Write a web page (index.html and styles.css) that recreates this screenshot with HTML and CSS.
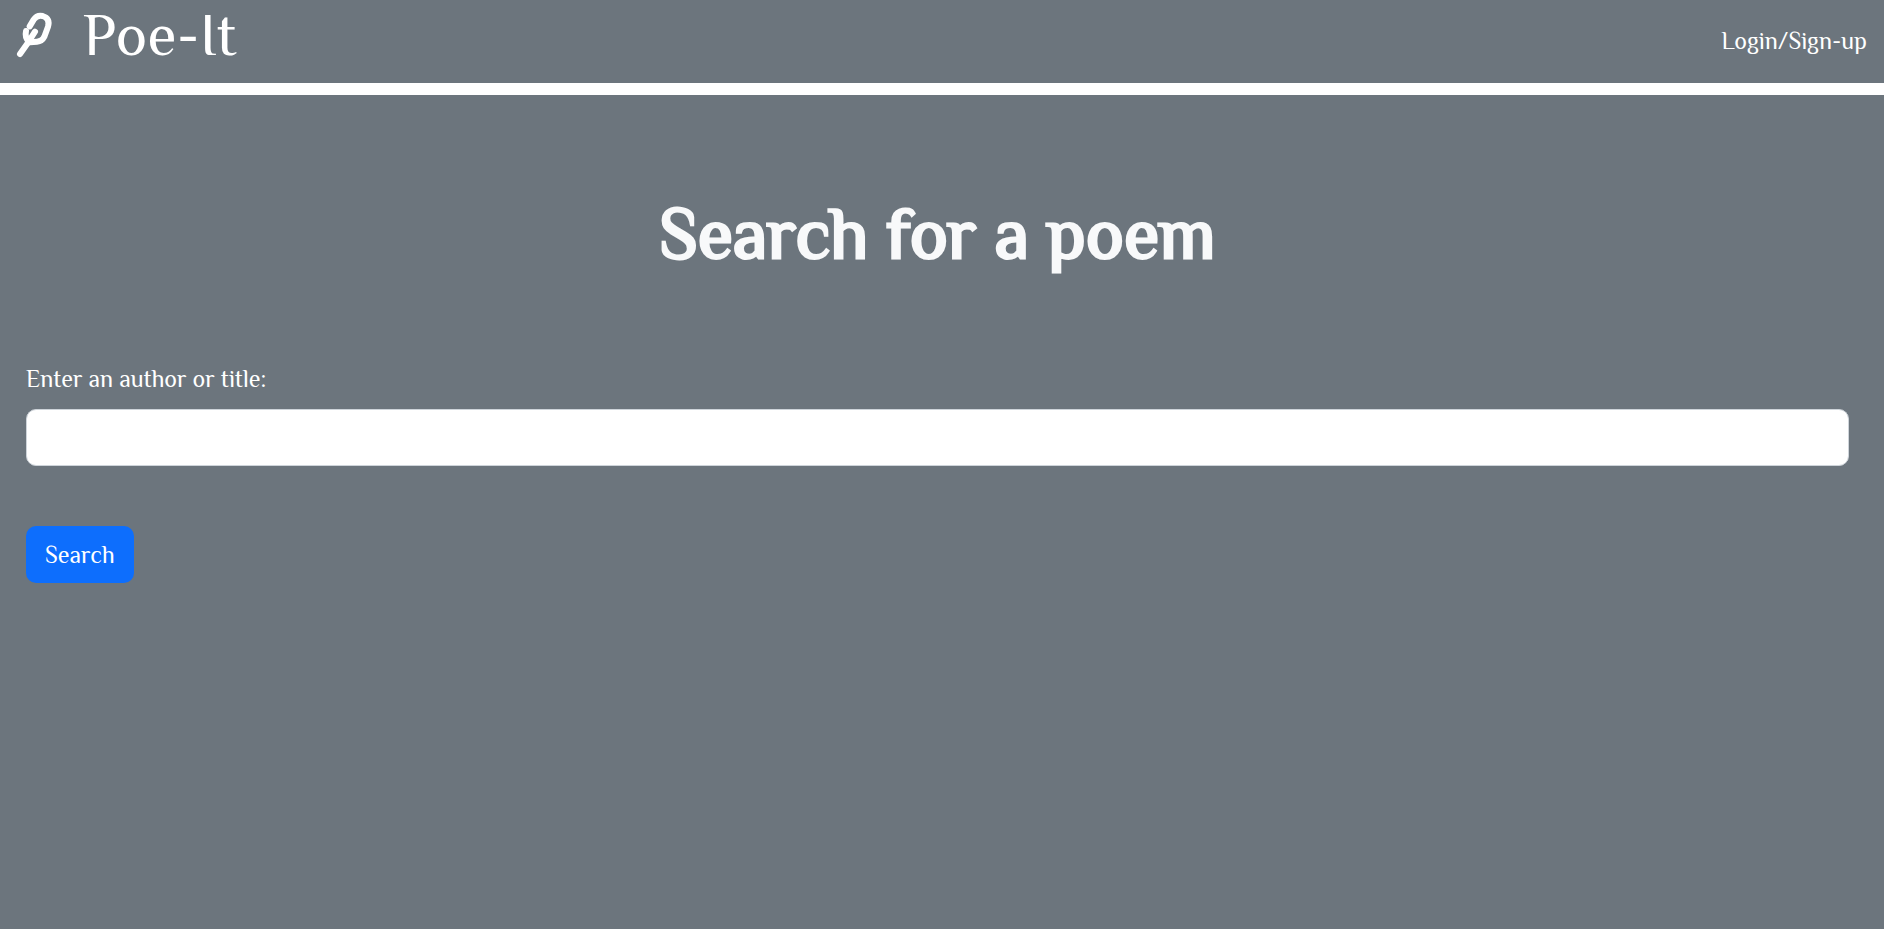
FILE: index.html
```html
<!DOCTYPE html>
<html lang="en">
<head>
<meta charset="utf-8">
<meta name="viewport" content="width=device-width, initial-scale=1">
<title>Poe-It</title>
<link rel="stylesheet" href="styles.css">
</head>
<body>
<header class="navbar">
  <a class="brand" href="#">
    <svg class="brand-icon" viewBox="0 0 168 180" aria-hidden="true">
      <path d="M65 67 L77 47 Q87 32 104 36 Q127 43 120 68 L109 98 Q102 112 87 113 L66 115"/>
      <path d="M36 150 L62 113 L81 83"/>
      <path d="M54 81 Q50 100 62 112"/>
    </svg>
    <span class="brand-name">Poe-It</span>
  </a>
  <a class="nav-link" href="#">Login/Sign-up</a>
</header>
<main class="content">
  <h1 class="title">Search for a poem</h1>
  <form class="search-form">
    <label class="label" for="query">Enter an author or title:</label>
    <input class="field" id="query" type="text">
    <button class="button" type="button">Search</button>
  </form>
</main>
</body>
</html>
```
FILE: styles.css
```css
* {
  box-sizing: border-box;
}

body {
  margin: 0;
  min-height: 100vh;
  background: #6c757d;
  color: #fff;
  font: 24px/36px Philosopher, "Liberation Serif", serif;
}

.navbar {
  display: flex;
  align-items: flex-start;
  justify-content: space-between;
  padding: 4px 17px 7px 8px;
  border-bottom: 12px solid #fff;
}

.brand {
  display: flex;
  gap: 19px;
  color: inherit;
  text-decoration: none;
}

.brand-icon {
  width: 56px;
  height: 60px;
  fill: none;
  stroke: #fff;
  stroke-width: 18;
  stroke-linecap: round;
  stroke-linejoin: round;
}

.brand-name {
  font-size: 60px;
  line-height: 62px;
  padding-bottom: 10px;
}

.nav-link {
  padding-top: 19px;
  color: inherit;
  text-decoration: none;
}

.content {
  padding: 93px 35px 48px 26px;
}

.title {
  margin: 0 0 81px;
  color: #f8f9fa;
  font-size: 72px;
  line-height: 92px;
  font-weight: 400;
  -webkit-text-stroke: 3px #f8f9fa;
  text-align: center;
}

.search-form {
  display: flex;
  flex-direction: column;
  align-items: flex-start;
}

.label {
  margin-bottom: 12px;
}

.field {
  width: 100%;
  height: 57px;
  margin-bottom: 60px;
  padding: 8px 16px;
  border: 1px solid #ced4da;
  border-radius: 10px;
  background: #fff;
  color: #212529;
  font: inherit;
}

.button {
  height: 57px;
  padding: 0 19px;
  border: 0;
  border-radius: 10px;
  background: #0d6efd;
  color: #fff;
  font: inherit;
}
```
